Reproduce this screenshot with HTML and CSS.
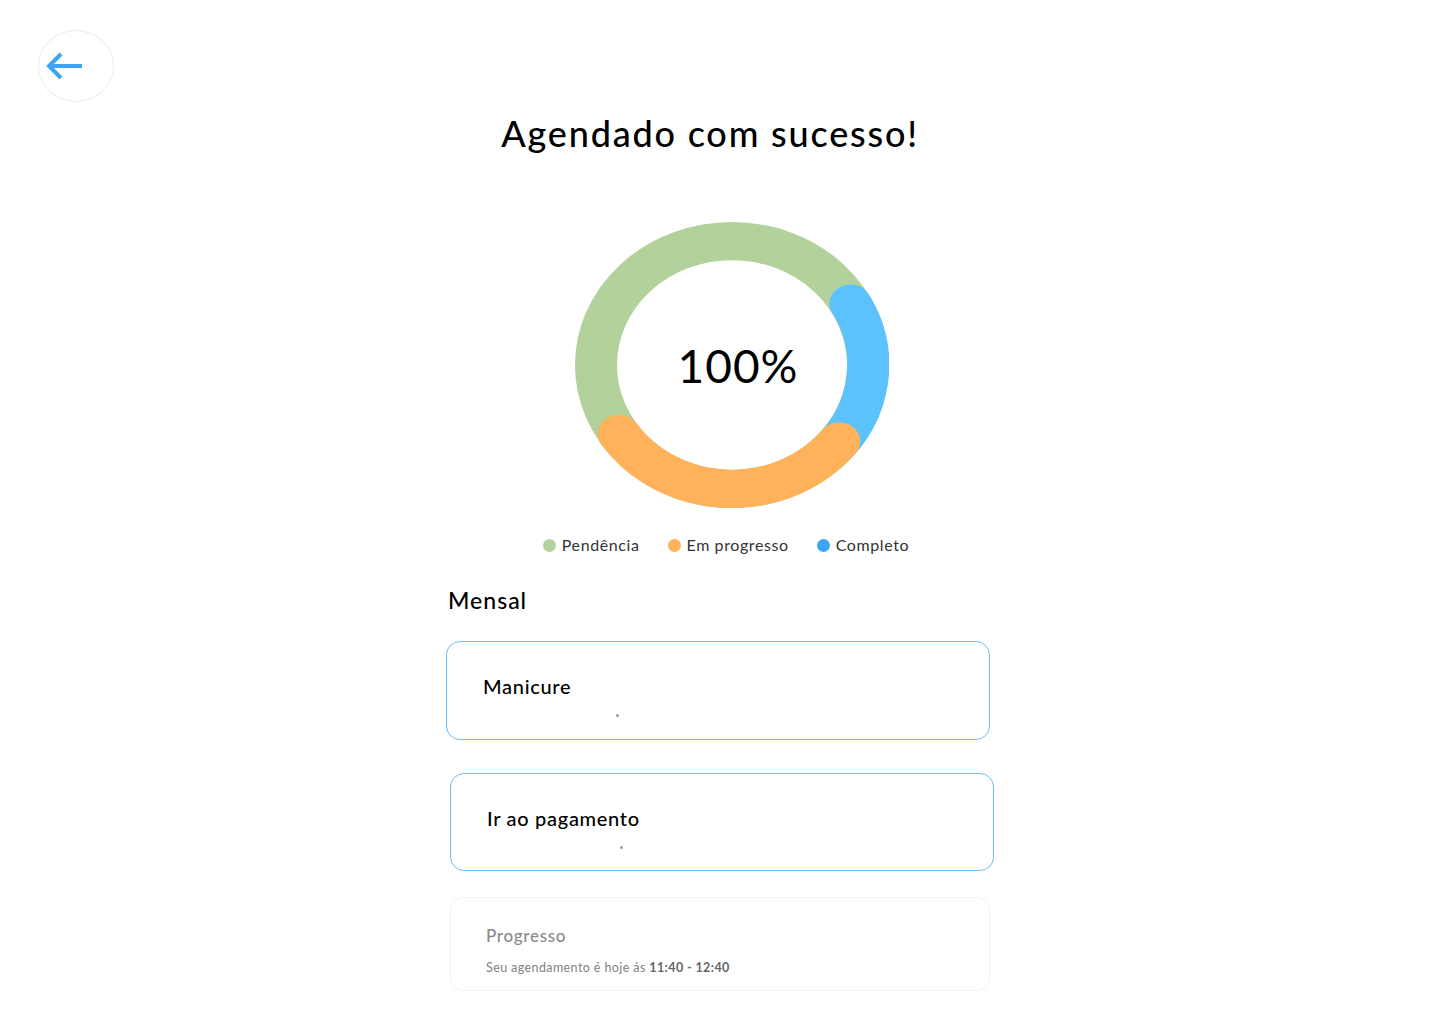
FILE: index.html
```html
<!DOCTYPE html>
<html lang="pt">
<head>
<meta charset="utf-8">
<title>Agendado com sucesso</title>
<link rel="stylesheet" href="styles.css">
</head>
<body>
<header class="top">
  <button class="back" aria-label="Voltar">
    <svg width="40" height="30" viewBox="0 0 40 30"><path d="M37 15H4M16 3L4 15l12 12" fill="none" stroke="#3aa6f5" stroke-width="4" stroke-linecap="butt" stroke-linejoin="miter"/></svg>
  </button>
</header>
<main class="content">
  <h1 class="title">Agendado com sucesso!</h1>
  <div class="chart">
    <div class="donut">
      <svg width="314" height="286" viewBox="0 0 314 314" preserveAspectRatio="none">
        <circle cx="157" cy="157" r="136" fill="none" stroke="#b3d19b" stroke-width="42"/>
        <path d="M275.5 89.6 A136 136 0 0 1 253.2 253.2" fill="none" stroke="#5bc2fd" stroke-width="42" stroke-linecap="round"/>
        <path d="M264.2 240.8 A136 136 0 0 1 43.9 232.7" fill="none" stroke="#ffb259" stroke-width="42" stroke-linecap="round"/>
      </svg>
      <span class="pct">100%</span>
    </div>
  </div>
  <ul class="legend">
    <li><span class="dot green"></span>Pendência</li>
    <li><span class="dot orange"></span>Em progresso</li>
    <li><span class="dot blue"></span>Completo</li>
  </ul>
  <h2 class="section">Mensal</h2>
  <div class="card card-first">
    <div class="card-title">Manicure</div>
    <span class="tick"></span>
  </div>
  <div class="card card-second">
    <div class="card-title">Ir ao pagamento</div>
    <span class="tick"></span>
  </div>
  <div class="card card-muted">
    <div class="muted-title">Progresso</div>
    <div class="muted-text">Seu agendamento é hoje ás <b>11:40 - 12:40</b></div>
  </div>
</main>
</body>
</html>
```
FILE: styles.css
```css
* { box-sizing: border-box; }
body {
  margin: 0;
  background: #fff;
  font-family: "Lato", "Open Sans", sans-serif;
  color: #000;
}
.top {
  padding: 30px 0 0 38px;
  height: 102px;
}
.back {
  width: 76px;
  height: 72px;
  border-radius: 50%;
  border: 1px solid #e4eefb;
  background: #fff;
  padding: 0;
  display: flex;
  align-items: center;
  justify-content: flex-start;
  padding-left: 6px;
  cursor: pointer;
}
.content {
  width: 548px;
  margin: 0 auto;
}
.title {
  margin: 9px -200px 0;
  padding-right: 20px;
  text-align: center;
  font-size: 36px;
  line-height: 44px;
  font-weight: 500;
  letter-spacing: 1.8px;
}
.chart {
  margin-top: 67px;
  display: flex;
  justify-content: center;
  padding-left: 24px;
}
.donut {
  position: relative;
  width: 314px;
  height: 286px;
}
.donut svg { display: block; }
.pct {
  position: absolute;
  left: 0; right: 0;
  top: 119px;
  text-align: center;
  padding-left: 12px;
  font-size: 46px;
  line-height: 50px;
  letter-spacing: 1px;
}
.legend {
  list-style: none;
  margin: 27px 0 0;
  padding: 0 0 0 12px;
  display: flex;
  justify-content: center;
  gap: 28px;
  font-size: 16px;
  line-height: 20px;
  color: #333;
  letter-spacing: 0.6px;
}
.legend li {
  display: flex;
  align-items: center;
  gap: 6px;
}
.dot {
  width: 13px;
  height: 13px;
  border-radius: 50%;
  display: inline-block;
}
.green { background: #b3d19b; }
.orange { background: #ffb259; }
.blue { background: #3aa6f5; }
.section {
  margin: 31px 0 0 2px;
  font-size: 23px;
  line-height: 28px;
  font-weight: 500;
  letter-spacing: 1px;
}
.card {
  width: 544px;
  height: 99px;
  border: 1px solid #6cbcf8;
  border-radius: 14px;
  padding: 32px 0 0 36px;
}
.card-first { margin-top: 27px; }
.card-second { margin: 33px 0 0 4px; height: 98px; }
.card-title {
  font-size: 20px;
  line-height: 24px;
  font-weight: 500;
  letter-spacing: 0.7px;
}
.tick {
  display: block;
  width: 3px;
  height: 3px;
  border-radius: 50%;
  background: #999;
  margin: 16px 0 0 133px;
}
.card-muted {
  margin: 26px 0 0 4px;
  width: 540px;
  height: 94px;
  border-color: #edf3fb;
  padding-top: 27px;
  padding-left: 35px;
}
.muted-title {
  font-size: 17px;
  line-height: 22px;
  color: #8a8a8a;
  font-weight: 500;
  letter-spacing: 0.7px;
}
.muted-text {
  margin-top: 13px;
  font-size: 12.5px;
  line-height: 16px;
  color: #828282;
  font-weight: 400;
  letter-spacing: 0.4px;
}
.muted-text b { color: #666; font-weight: 700; }
```
